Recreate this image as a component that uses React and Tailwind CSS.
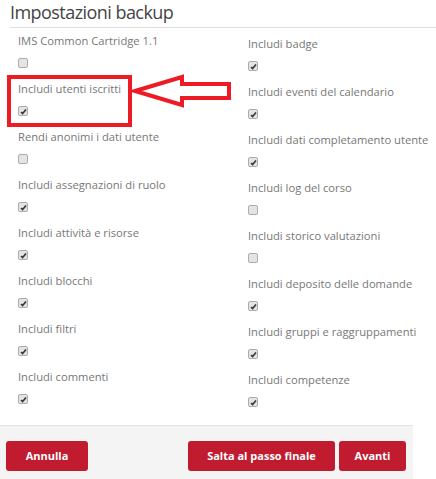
import React from "react";

const left = [
  ["IMS Common Cartridge 1.1", false],
  ["Includi utenti iscritti", true],
  ["Rendi anonimi i dati utente", false],
  ["Includi assegnazioni di ruolo", true],
  ["Includi attività e risorse", true],
  ["Includi blocchi", true],
  ["Includi filtri", true],
  ["Includi commenti", true],
];

const right = [
  ["Includi badge", true],
  ["Includi eventi del calendario", true],
  ["Includi dati completamento utente", true],
  ["Includi log del corso", false],
  ["Includi storico valutazioni", false],
  ["Includi deposito delle domande", true],
  ["Includi gruppi e raggruppamenti", true],
  ["Includi competenze", true],
];

function Box({ checked }) {
  return (
    <span className="mt-[7px] flex h-[10px] w-[10px] items-center justify-center rounded-[2px] border border-[#acacac] bg-[#e4e4e4]">
      {checked && (
        <svg width="7" height="7" viewBox="0 0 7 7">
          <path d="M1 4 L2.6 5.6 L6 1.5" fill="none" stroke="#333" strokeWidth="1.6" />
        </svg>
      )}
    </span>
  );
}

function Item({ label, checked }) {
  return (
    <div className="flex h-[48px] flex-col items-start">
      <span className="text-[11.2px] leading-[20px] whitespace-nowrap text-[#777]">{label}</span>
      <Box checked={checked} />
    </div>
  );
}

export default function App() {
  return (
    <div
      className="relative h-[479px] w-[436px] overflow-hidden bg-white"
      style={{ fontFamily: '"Open Sans", sans-serif' }}
    >
      <div className="ml-[10px] border-b border-[#dedede] pb-[3px]">
        <h2 className="text-[18px] leading-[24px] tracking-[-0.55px] text-[#444]">Impostazioni backup</h2>
      </div>
      <div className="flex pl-[18px]">
        <div className="w-[230px] shrink-0 pt-[3px]">
          {left.map(([l, c]) => (
            <Item key={l} label={l} checked={c} />
          ))}
        </div>
        <div className="shrink-0 pt-[6px]">
          {right.map(([l, c]) => (
            <Item key={l} label={l} checked={c} />
          ))}
        </div>
      </div>
      <div className="mt-[7px] flex w-[413px] items-start justify-between border-t border-[#e3e3e3] bg-[#f4f4f4] pr-[7px] pl-[6px] pt-[15px] pb-[10px]">
        <button className="h-[30px] w-[82px] rounded-[3px] bg-[#c01b2f] text-[11px] font-bold text-white">
          Annulla
        </button>
        <div className="flex gap-[4px]">
          <button className="h-[30px] w-[147px] rounded-[3px] bg-[#c01b2f] text-[11px] font-bold text-white">
            Salta al passo finale
          </button>
          <button className="h-[30px] w-[67px] rounded-[3px] bg-[#c01b2f] text-[11px] font-bold text-white">
            Avanti
          </button>
        </div>
      </div>
      <svg className="pointer-events-none absolute top-0 left-0" width="436" height="479">
        <rect x="9" y="77" width="121" height="48" fill="none" stroke="#ed1c24" strokeWidth="4" />
        <path
          d="M135 91 L182 77 L182 84 L229 84 L229 98 L182 98 L182 105 Z"
          fill="none"
          stroke="#ed1c24"
          strokeWidth="4"
          strokeLinejoin="miter"
        />
      </svg>
    </div>
  );
}
